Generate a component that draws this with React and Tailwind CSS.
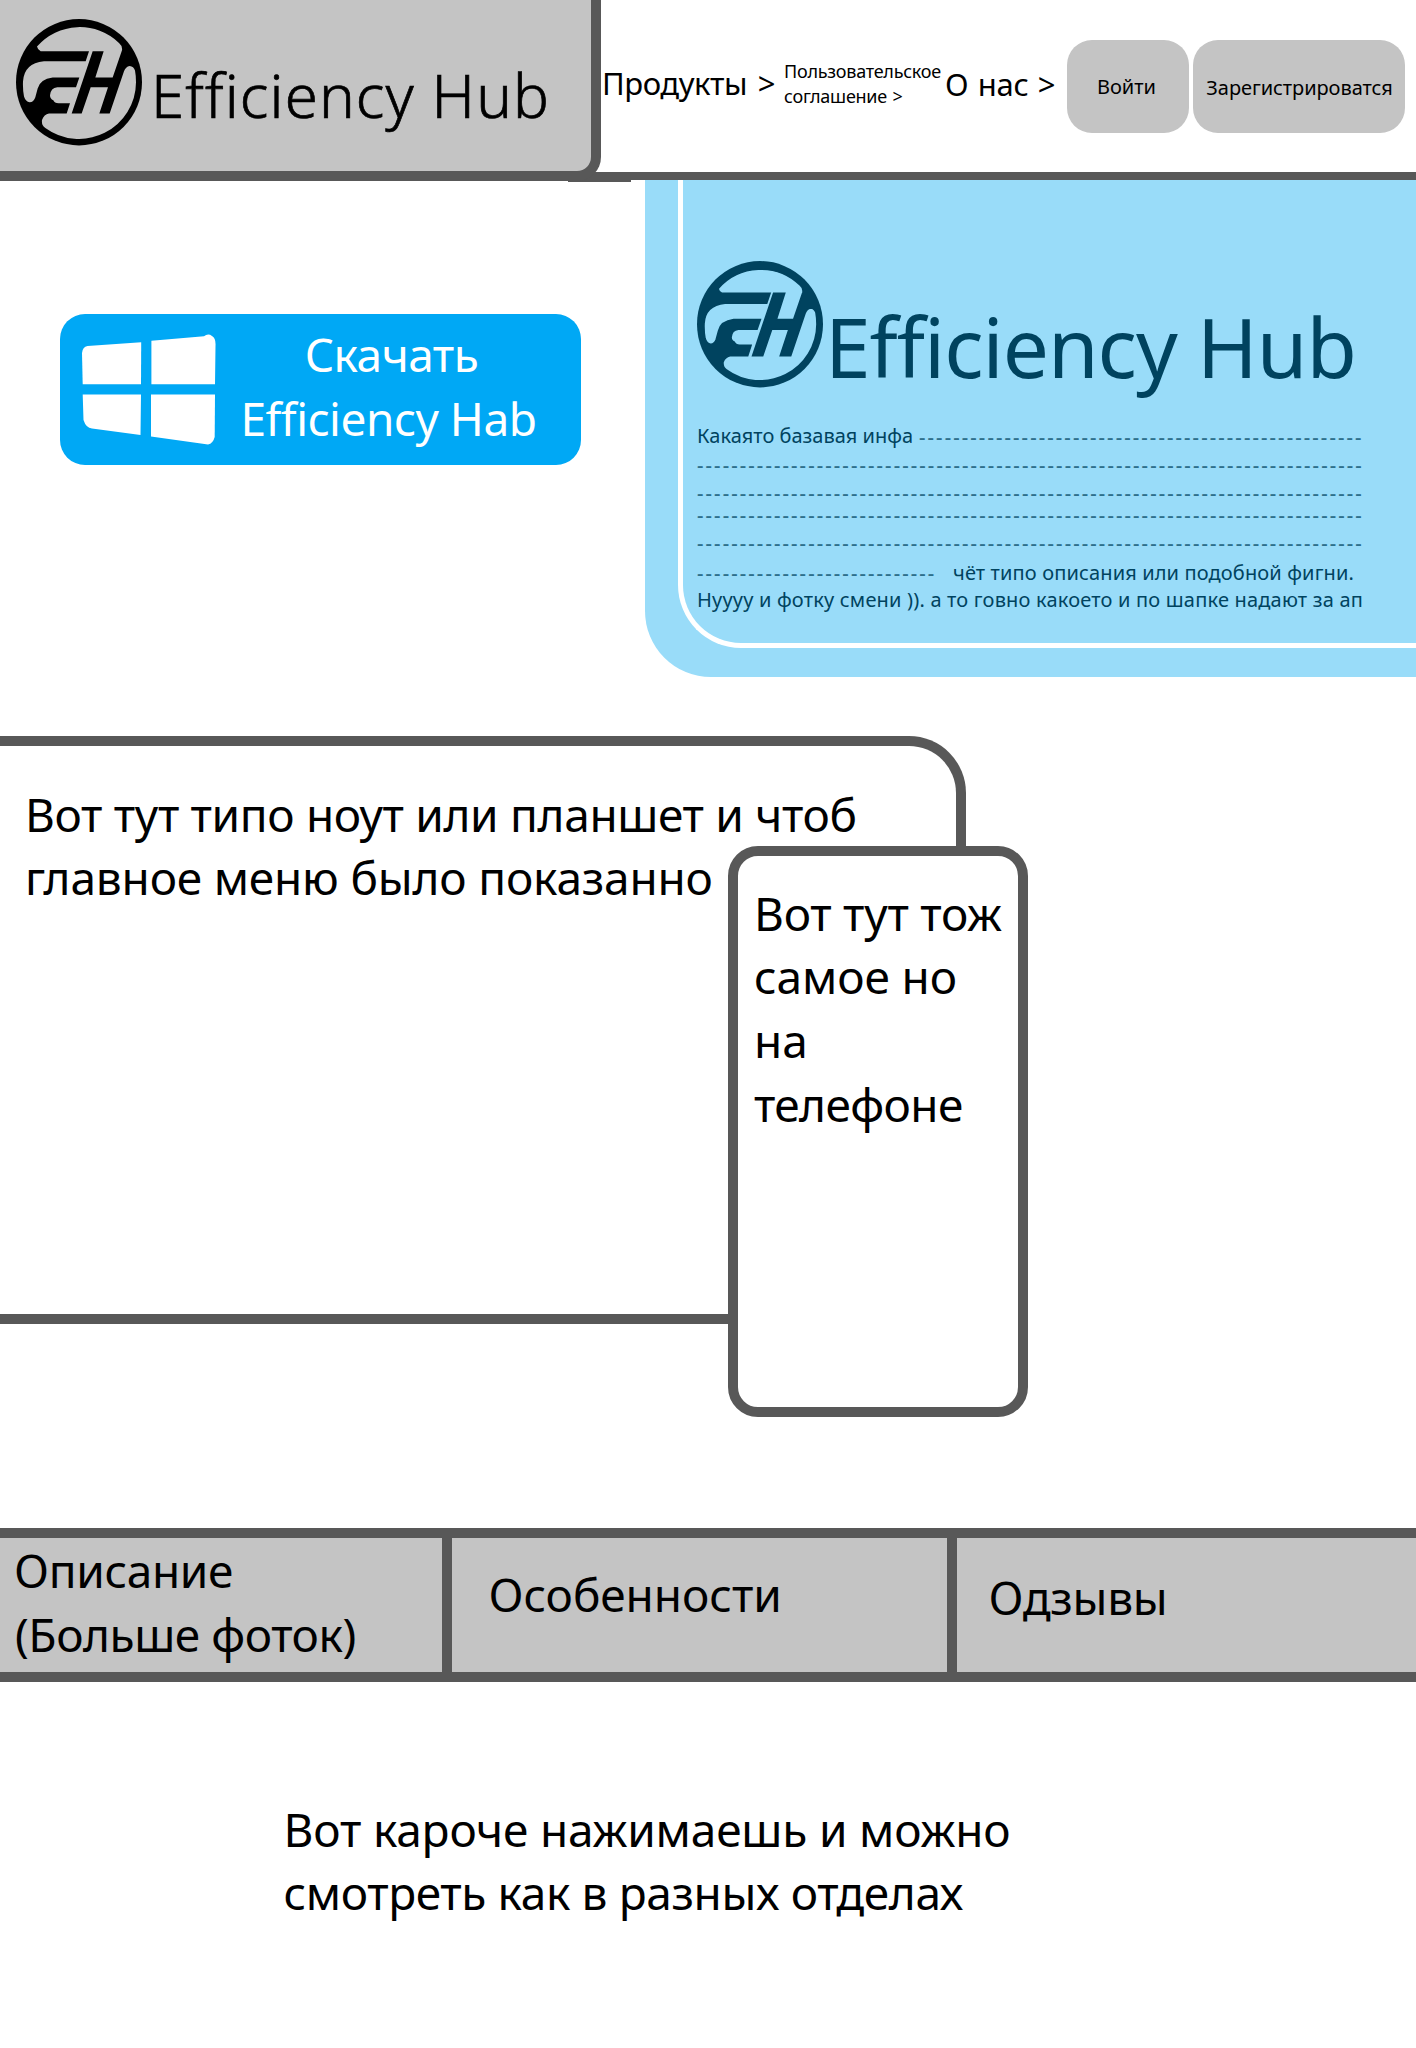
import React from 'react';

function Logo({ ring, hole, heavy }) {
  return (
    <svg viewBox="48 57.5 378 379" className="h-[126.5px] w-[126px] shrink-0">
      <ellipse cx="237" cy="247" rx="189" ry="189.5" fill={ring} />
      <path
        fill={hole}
        stroke={heavy ? ring : 'none'}
        strokeWidth={heavy ? 5 : 0}
        d="M111 140 A170 170 0 0 1 357 129 Q368 138 366 151 L338 233 L286 233 L311 154 L278 154 L215 341 L245 341 L272 262 L324 262 L298 341 L329 341 L372 214 Q377 200 389 198 Q401 199 405 212 Q408 228 408 247 A171 171 0 0 1 136 384 Q124 376 126 360 Q132 344 147 341 L200 341 L210 310 L176 310 Q163 310 160 301 Q150 297 150 286 Q152 264 172 262 L228 262 L238 233 L158 233 Q120 238 113 266 L106 292 Q101 307 89 307 Q77 306 72 290 Q68 270 69 245 Q72 190 132 184 L257 184 L267 154 L122 154 Q113 150 111 140 Z"
      />
    </svg>
  );
}

function WindowsIcon() {
  return (
    <svg viewBox="82 334 134 111" className="mt-5 h-[111px] w-[134px] shrink-0" fill="#fff">
      <path d="M82 353 Q82.500 347 87.500 346 L141.200 342.300 L141 384.300 L82.700 384.300 Z" />
      <path d="M151.400 340.800 L204 336.300 Q208 333 212 336 Q216 338 215.500 346 L215 384.300 L151.400 384.300 Z" />
      <path d="M82.700 394.500 L141 394.500 L140.500 435 L92 428.500 Q86 428 83.500 420 Z" />
      <path d="M151 394.500 L215 394.500 L214.700 437 Q213 443.500 208 444.500 L151 436.500 Z" />
    </svg>
  );
}

function Header() {
  return (
    <header className="relative z-10 flex h-[181px] items-start">
      <div className="z-10 flex h-[181px] w-[601px] shrink-0 items-start rounded-br-[24px] border-r-[10px] border-b-[10px] border-[#585858] bg-[#c4c4c4] pt-[19px] pl-4">
        <Logo ring="#000" hole="#c4c4c4" />
        <h1 className="mt-[35px] ml-[9px] text-[60px] leading-[82px] font-light tracking-[1.15px] whitespace-nowrap [-webkit-text-stroke:0.7px_#000]">Efficiency Hub</h1>
      </div>
      <nav className="-ml-[34px] flex h-[179.5px] flex-1 items-start border-b-[8.5px] border-[#585858] bg-white pl-[35px]">
        <a className="mt-[61px] w-[182px] text-[31px] leading-[44px] tracking-[-0.45px] whitespace-nowrap [word-spacing:3px]">Продукты &gt;</a>
        <a className="mt-[59px] w-[161px] text-[18px] leading-[24.500px] tracking-[-0.25px] [word-spacing:1px]">
          Пользовательское
          <br />
          соглашение &gt;
        </a>
        <a className="mt-[62px] w-[121px] text-[31px] leading-[44px] tracking-[-0.25px] whitespace-nowrap [word-spacing:1.5px]">О нас &gt;</a>
        <button className="mt-10 mr-1 ml-px h-[93px] w-[122px] rounded-[25px] bg-[#c4c4c4] pr-[3px] text-[20px]">Войти</button>
        <button className="mt-10 h-[93px] w-[212px] rounded-[25px] bg-[#c4c4c4] pt-[2px] pl-px text-[20px] tracking-[-0.06px]">Зарегистрироватся</button>
      </nav>
      <div className="absolute bottom-[-0.5px] left-[568px] h-[4px] w-[63px] bg-[#585858]" />
    </header>
  );
}

function Dashes({ count }) {
  return <span className="relative top-px font-medium tracking-[2.13px] opacity-70">{'-'.repeat(count)}</span>;
}

function Hero() {
  return (
    <section className="-mt-[2px] flex h-[556.5px] items-start justify-between">
      <button className="mt-[135px] ml-[60px] flex h-[150.5px] w-[521px] items-start rounded-[25px] bg-[#00a8f5] pl-[22px] text-white">
        <WindowsIcon />
        <span className="mt-[7.5px] ml-[21.5px] w-[302px] text-center text-[46px] leading-[64px] tracking-[-0.5px]">
          <span className="block pl-1.5">Скачать</span>
          <span className="block">Efficiency Hab</span>
        </span>
      </button>
      <div className="h-[498px] w-[771px] rounded-bl-[66px] bg-[#99dcf9] pl-[33px]">
        <div className="h-[469px] rounded-bl-[63px] border-b-[5.5px] border-l-[5px] border-white pt-[82px] pl-[14px] text-[#00435f]">
          <div className="flex h-[165px] items-start">
            <Logo ring="#00435f" hole="#99dcf9" heavy />
            <h2 className="mt-[29px] ml-[2px] text-[82px] leading-[112px] tracking-[-1px] whitespace-nowrap">Efficiency Hub</h2>
          </div>
          <div className="text-[20px] leading-5 whitespace-nowrap">
            <div className="flex h-[28.3px]">
              <span className="w-[222px]">Какаято базавая инфа</span>
              <Dashes count={52} />
            </div>
            <div className="h-7"><Dashes count={78} /></div>
            <div className="h-[22px]"><Dashes count={78} /></div>
            <div className="h-7"><Dashes count={78} /></div>
            <div className="h-[30.4px]"><Dashes count={78} /></div>
            <div className="flex h-[27.800px]">
              <span className="-mt-px w-[256px]"><Dashes count={28} /></span>
              <span className="tracking-[0.13px]">чёт типо описания или подобной фигни.</span>
            </div>
            <div className="tracking-[0.19px]">Нуууу и фотку смени )). а то говно какоето и по шапке надают за ап</div>
          </div>
        </div>
      </div>
    </section>
  );
}

function Devices() {
  return (
    <section className="relative h-[792px] text-[46px] whitespace-nowrap">
      <div className="h-[588px] w-[966px] rounded-tr-[57px] border-y-[10px] border-r-[10px] border-[#585858] pt-[37px] pl-[25px] leading-[63.5px]">
        <p className="tracking-[-0.34px]">Вот тут типо ноут или планшет и чтоб</p>
        <p className="tracking-[-0.18px]">главное меню было показанно</p>
      </div>
      <div className="absolute top-[110.5px] left-[728px] h-[570.5px] w-[300px] rounded-[30px] border-[10px] border-[#585858] bg-white pt-[25.5px] pl-[16px] leading-[63.8px]">
        <p className="tracking-[-0.25px]">Вот тут тож</p>
        <p className="tracking-[-0.1px]">самое но</p>
        <p>на</p>
        <p className="tracking-[-0.6px]">телефоне</p>
      </div>
    </section>
  );
}

function Tabs() {
  return (
    <div className="flex h-[154px] border-y-[10px] border-[#585858] bg-[#c4c4c4] text-[46px] leading-[64px]">
      <div className="w-[452px] border-r-[10px] border-[#585858] pl-[14px] whitespace-nowrap">
        <p className="tracking-[-0.35px]">Описание</p>
        <p className="pl-px tracking-[-0.45px]">(Больше фоток)</p>
      </div>
      <div className="w-[505px] border-r-[10px] border-[#585858] pt-[24.500px] pl-[36.500px] tracking-[-0.05px]">Особенности</div>
      <div className="flex-1 pt-[27.500px] pl-[31.500px] tracking-[-0.3px]">Одзывы</div>
    </div>
  );
}

export default function App() {
  return (
    <main className="h-[2048px] w-[1416px] overflow-hidden bg-white font-['Noto_Sans','Open_Sans',sans-serif] text-black">
      <Header />
      <Hero />
      <Devices />
      <Tabs />
      <div className="pt-[116px] pl-[283.5px] text-[46px] leading-[63.5px] whitespace-nowrap">
        <p className="tracking-[-0.18px]">Вот кароче нажимаешь и можно</p>
        <p className="tracking-[-0.38px]">смотреть как в разных отделах</p>
      </div>
    </main>
  );
}
